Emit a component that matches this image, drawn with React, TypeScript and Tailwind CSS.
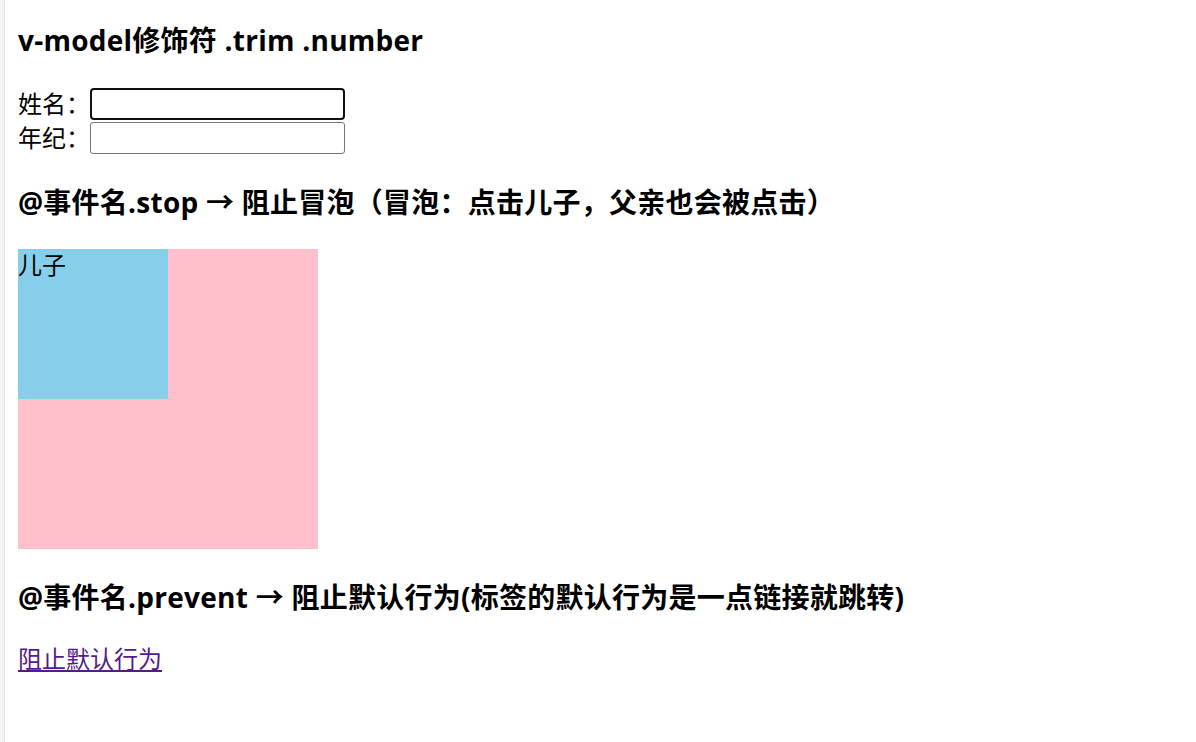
const font = { fontFamily: '"Open Sans", "Noto Sans CJK SC", sans-serif' };

function Heading({ children, className = "" }: { children: string; className?: string }) {
  return (
    <h3 className={`text-[28px] font-bold leading-[37px] tracking-[0.25px] text-black ${className}`}>
      {children}
    </h3>
  );
}

function Field({ label, focused }: { label: string; focused?: boolean }) {
  return (
    <div className="flex h-[34px] items-center">
      <span className="w-[72px] text-[24px] leading-[32px]">{label}</span>
      <input
        className={
          focused
            ? "h-[32px] w-[255px] rounded-[4px] border-2 border-[#101010] bg-white outline-none"
            : "h-[32px] w-[255px] rounded-[3px] border border-[#767676] bg-white outline-none"
        }
      />
    </div>
  );
}

export default function App() {
  return (
    <div
      className="flex min-h-[742px] bg-white text-black"
      style={{ fontFamily: '"Open Sans", "Noto Sans CJK SC", sans-serif' }}
    >
      <div className="w-[5px] shrink-0 border-r border-[#e6e6e6] bg-[#f3f3f3]" />
      <main className="flex-1 pl-[13px] pt-[22px]" style={font}>
        <Heading>v-model修饰符 .trim .number</Heading>

        <div className="mt-[28px]">
          <Field label="姓名：" focused />
          <Field label="年纪：" />
        </div>

        <Heading className="mt-[29px]">@事件名.stop → 阻止冒泡（冒泡：点击儿子，父亲也会被点击）</Heading>

        <div className="mt-[28px] h-[300px] w-[300px] bg-[#ffc0cb]">
          <div className="h-[150px] w-[150px] bg-[#87ceeb] text-[24px] leading-[32px]">儿子</div>
        </div>

        <Heading className="mt-[30px]">@事件名.prevent → 阻止默认行为(标签的默认行为是一点链接就跳转)</Heading>

        <p className="mt-[27px] text-[24px] leading-[32px]">
          <a href="#" className="text-[#551a8b] underline">
            阻止默认行为
          </a>
        </p>
      </main>
    </div>
  );
}
